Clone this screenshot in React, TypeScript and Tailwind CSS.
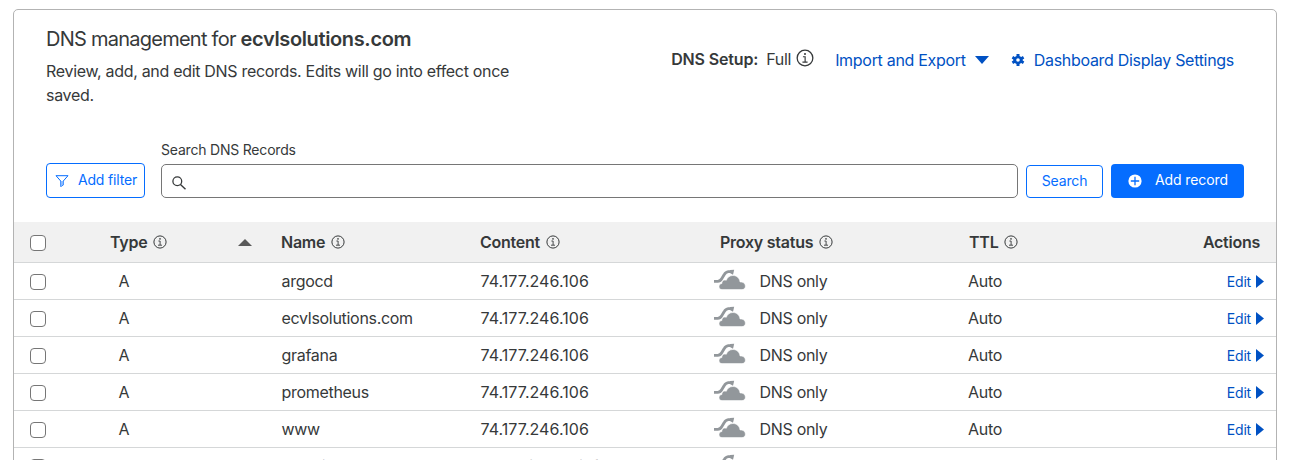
import React from "react";

const Info = ({ size = 14, className = "" }: { size?: number; className?: string }) => (
  <svg width={size} height={size} viewBox="0 0 14 14" fill="none" stroke="#36393a" className={`shrink-0 ${className}`}>
    <circle cx="7" cy="7" r="6.100" strokeWidth="1" />
    <path d="M5.400 6h1.700v4M5 10.200h4" strokeWidth="0.900" />
    <circle cx="7" cy="3.900" r="0.800" fill="#36393a" stroke="none" />
  </svg>
);

const Cloud = () => (
  <svg width="33" height="21" viewBox="0 0 33 21" className="-mt-[4px] shrink-0">
    <path d="M1 12.300H4.700c2 0 3-.8 4-2.500l2.400-4C12.200 3.800 13.500 2.900 15.300 2.700h3" fill="none" stroke="#92979b" strokeWidth="2.800" />
    <path d="M17 0.900l4.200-.1-1.200 4.900L16.900 4z" fill="#92979b" />
    <path d="M9 20.600C7.200 20.600 6 19.400 6 17.600c0-1.700 1.200-3 2.900-3.100-.2-2 1.200-3.500 3-3.500.5 0 1 .1 1.400.3C14.300 8.300 16.900 6.500 19.900 6.500c3.800 0 6.600 2.600 7.100 6.400 2.800-.2 5.400 1.300 5.400 4.200 0 2-1.400 3.500-3.500 3.500z" fill="#92979b" stroke="#fff" strokeWidth="0.600" />
  </svg>
);

const Check = () => (
  <input type="checkbox" className="mt-px block size-4 appearance-none rounded-[4px] border border-[#767676] bg-white" />
);

const cols = "grid grid-cols-[97px_170px_199px_239px_250px_1fr]";

const Head = ({ children, className = "" }: { children: string; className?: string }) => (
  <span className={`flex items-center gap-[6px] text-[16px] font-semibold tracking-[-0.25px] ${className}`}>
    <span>{children}</span>
    {children !== "Actions" && <Info />}
  </span>
);

const records = [
  { name: "argocd", content: "74.177.246.106" },
  { name: "ecvlsolutions.com", content: "74.177.246.106" },
  { name: "grafana", content: "74.177.246.106" },
  { name: "prometheus", content: "74.177.246.106" },
  { name: "www", content: "74.177.246.106" },
  { name: "ecmail", content: "ssl.mailhbox.info" },
];

export default function App() {
  return (
    <div className="h-[460px] overflow-hidden bg-white pt-[9px] pl-[13px] font-['Inter',sans-serif] text-[#36393a]">
      <main className="h-[480px] w-[1264px] rounded-[5px] border border-[#b3b3b3]">
        <header className="flex h-[133px] justify-between pr-[42px] pl-8">
          <div className="pt-[14px]">
            <h1 className="text-[20px] leading-[30px] tracking-[-0.750px] whitespace-nowrap">
              DNS management for <b className="font-semibold tracking-[-0.360px]">ecvlsolutions.com</b>
            </h1>
            <p className="mt-[5px] w-[500px] text-[16px] leading-6 tracking-[-0.310px]">
              Review, add, and edit DNS records. Edits will go into effect once
              <br />
              saved.
            </p>
          </div>
          <div className="mt-[38px] flex h-6 items-center text-[16px] tracking-[-0.3px] whitespace-nowrap">
            <b className="mb-[2px] font-semibold tracking-[-0.150px]">DNS Setup:</b>
            <span className="mr-[5px] mb-[2px] ml-2">Full</span>
            <Info size={18} className="mb-1" />
            <a className="ml-[21px] text-[#0051c3]">Import and Export</a>
            <svg width="14" height="8" className="ml-[9px]">
              <path d="M0 0h14L7 8z" fill="#0051c3" />
            </svg>
            <svg width="14" height="14" viewBox="0 0 14 14" className="ml-[22px]">
              <path d="M5.500 1h3v2l1.700 1 1.700-1 1.400 2.500L11.700 6.500v1l1.600 1L11.900 11l-1.700-1-1.700 1v2h-3v-2l-1.700-1-1.700 1L.7 8.500l1.600-1v-1L.7 5.500 2.100 3l1.700 1 1.700-1zM7 5.200a1.800 1.800 0 100 3.600 1.800 1.800 0 000-3.600z" fill="#0051c3" fillRule="evenodd" />
            </svg>
            <a className="ml-[9px] text-[#0051c3]">Dashboard Display Settings</a>
          </div>
        </header>
        <section className="flex h-[79px] pl-8 text-[14px]">
          <button className="mt-5 flex h-[35px] w-[99px] items-center rounded-[4px] border border-[#056dff] pl-[8px] text-[#056dff]">
            <svg width="14" height="12" viewBox="0 0 14 12" fill="none" stroke="#056dff">
              <path d="M1 .7h12L8.300 6v4L5.700 11.500V6z" />
              <path d="M5.700 6h2.600v4l-2.600 1z" fill="#8abaff" stroke="none" />
            </svg>
            <span className="mb-[2px] ml-[9px] tracking-[-0.180px] whitespace-nowrap">Add filter</span>
          </button>
          <div className="ml-4 w-[857px]">
            <label className="block h-[21px] leading-[14px] tracking-[-0.200px]">Search DNS Records</label>
            <div className="flex h-[34px] items-center rounded-[5px] border border-[#767676] pl-[10px]">
              <svg width="14" height="14" viewBox="0 0 14 14" fill="none" stroke="#36393a" className="mt-[3px]">
                <circle cx="5.300" cy="5.300" r="4.400" strokeWidth="1.300" />
                <path d="M8.500 8.500l5 4.700" strokeWidth="1.400" />
              </svg>
            </div>
          </div>
          <button className="mt-[22px] ml-2 h-[33px] w-[77px] rounded-[4px] border border-[#056dff] pb-[2px] tracking-[-0.150px] text-[#056dff]">Search</button>
          <button className="mt-[21px] ml-2 flex h-[34px] w-[133px] items-center rounded-[4px] bg-[#056dff] pl-[17px] text-white">
            <svg width="14" height="14" viewBox="0 0 14 14">
              <circle cx="7" cy="7" r="6.600" fill="#fff" />
              <path d="M7 2.800v8.400M2.800 7h8.400" stroke="#056dff" strokeWidth="1.300" />
            </svg>
            <span className="mb-[3px] ml-[13px] tracking-[-0.100px] whitespace-nowrap">Add record</span>
          </button>
        </section>
        <div className={`${cols} h-[41px] items-center border-b border-[#d5d7d8] bg-[#f1f1f1]`}>
          <div className="pl-4"><Check /></div>
          <div className="-ml-px flex items-center justify-between pr-[29px]">
            <Head>Type</Head>
            <svg width="14" height="7"><path d="M0 7h14L7 0z" fill="#595959" /></svg>
          </div>
          <Head>Name</Head>
          <Head>Content</Head>
          <Head className="ml-px">Proxy status</Head>
          <div className="flex justify-between pr-4">
            <Head>TTL</Head>
            <Head>Actions</Head>
          </div>
        </div>
        {records.map((r) => (
          <div key={r.name} className={`${cols} h-[37px] items-center border-b border-[#d5d7d8] text-[16px] tracking-[-0.3px]`}>
            <div className="pl-4"><Check /></div>
            <span className="pl-[7.500px]">A</span>
            <span className="pl-[0.500px]">{r.name}</span>
            <span className="pl-[0.500px] tracking-[0.050px]">{r.content}</span>
            <div className="-ml-[6px] flex items-center gap-[13.500px]"><Cloud /><span>DNS only</span></div>
            <div className="-ml-px flex items-center justify-between pr-3">
              <span>Auto</span>
              <span className="mt-px flex items-center gap-[5px] text-[14px] tracking-[-0.200px] text-[#0051c3]">
                Edit
                <svg width="8" height="13"><path d="M0 0v13l8-6.500z" fill="#0051c3" /></svg>
              </span>
            </div>
          </div>
        ))}
      </main>
    </div>
  );
}
